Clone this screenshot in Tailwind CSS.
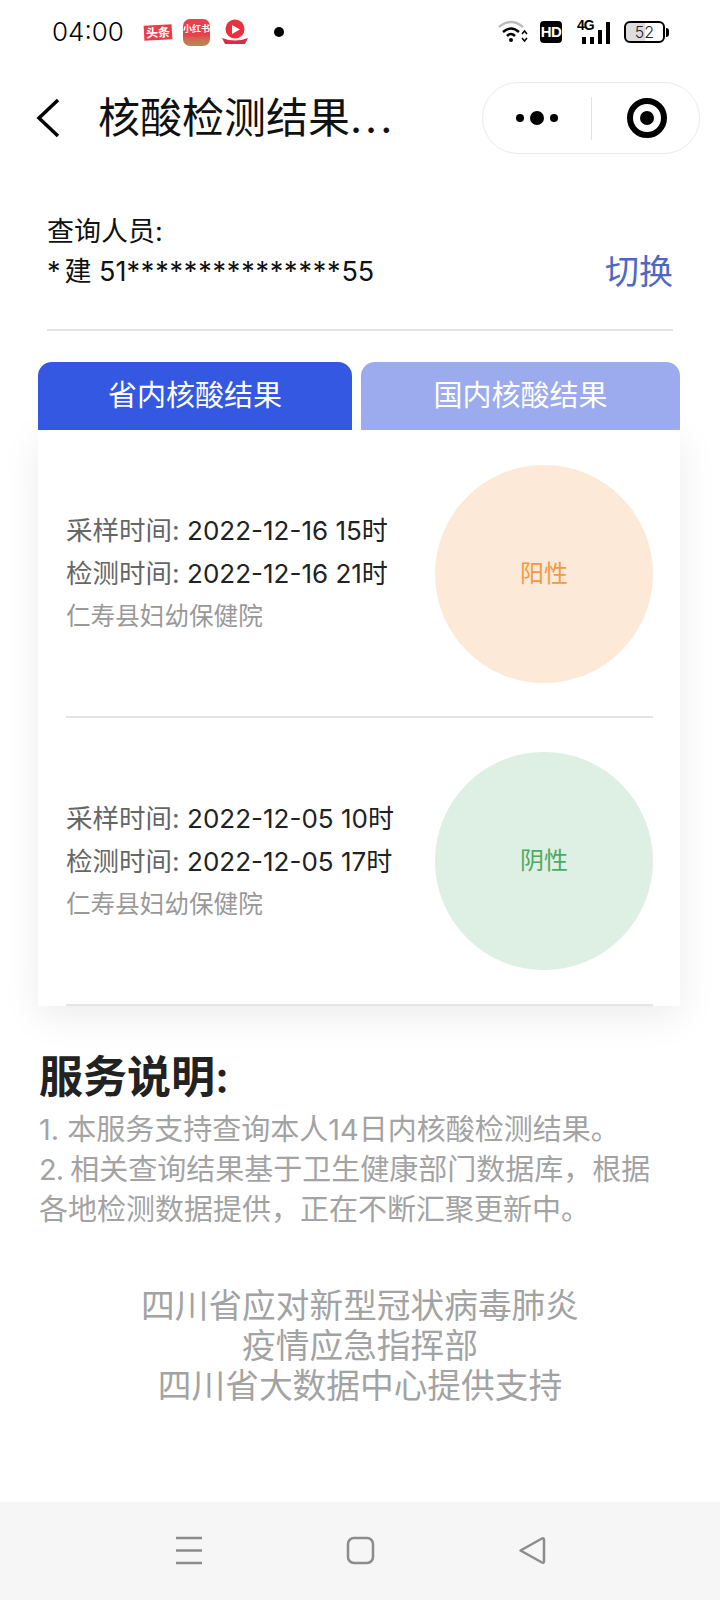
<!DOCTYPE html>
<html lang="zh">
<head>
    <meta charset="UTF-8">
    <meta name="viewport" content="width=device-width, initial-scale=1.0">
    <title>核酸检测结果</title>
    <script src="https://cdn.jsdelivr.net/npm/@tailwindcss/browser@4"></script>
</head>
<body class="bg-white font-['Inter','Noto_Sans_CJK_SC',sans-serif]">
    <div class="w-[720px] h-[1600px] flex flex-col overflow-hidden">
        <!-- status bar -->
        <div class="h-[64px] flex items-center pl-[52px] pr-[51px] text-black">
            <span class="text-[26px] w-[92px] leading-none font-light">04:00</span>
            <span class="w-[28px] h-[15px] bg-[#e5404a] rotate-[-3deg] text-white text-[12px] font-bold leading-[15px] text-center">头条</span>
            <span class="ml-[11px] w-[27px] h-[27px] rounded-[7px] bg-gradient-to-b from-[#e8404c] from-60% to-[#a88f5c] text-white text-[9px] font-bold leading-[20px] text-center">小红书</span>
            <svg class="ml-[11px]" width="28" height="26" viewBox="0 0 28 26">
                <circle cx="14" cy="10" r="9.5" fill="#e8303f"/>
                <path d="M11 6l8 4.500-8 4.500z" fill="#fff"/>
                <path d="M1 19q13 5 26 0l-3 6H4z" fill="#d92b4a"/>
            </svg>
            <span class="ml-[25px] w-[10px] h-[10px] rounded-full bg-black"></span>
            <div class="ml-auto flex items-center">
                <svg width="30" height="24" viewBox="0 0 30 24">
                    <path d="M1 7q12-10 24 0" fill="none" stroke="#bbb" stroke-width="2.500"/>
                    <path d="M5 12q8-7 16 0" fill="none" stroke="#000" stroke-width="2.500"/>
                    <path d="M9 16q4-4 8 0" fill="none" stroke="#000" stroke-width="2.500"/>
                    <circle cx="13" cy="20" r="2" fill="#000"/>
                    <path d="M24 14l2.500-3 2.500 3M24 18l2.500 3 2.500-3" fill="none" stroke="#000" stroke-width="1.500"/>
                </svg>
                <span class="ml-[12px] w-[22px] h-[22px] rounded-[4px] bg-black text-white text-[15px] tracking-[-0.5px] font-bold leading-[22px] text-center font-['Liberation_Sans']">HD</span>
                <span class="ml-[15px] relative w-[34px] h-[24px]">
                    <span class="absolute left-0 top-[-2px] text-[14px] tracking-[-1px] font-bold leading-none font-['Liberation_Sans']">4G</span>
                    <span class="absolute left-[5px] bottom-0 w-[4px] h-[7px] bg-black"></span>
                    <span class="absolute left-[13px] bottom-0 w-[4px] h-[7px] bg-black"></span>
                    <span class="absolute left-[21px] bottom-0 w-[4px] h-[14px] bg-black"></span>
                    <span class="absolute left-[29px] bottom-0 w-[4px] h-[22px] bg-black"></span>
                </span>
                <span class="ml-[13px] w-[41px] h-[22px] rounded-[6px] border-2 border-black text-[16px] font-light leading-[18px] text-center bg-gradient-to-r from-[#ddd] from-[52%] to-white to-[52%] text-[#222]">52</span>
                <span class="ml-[1px] w-[3px] h-[9px] bg-black rounded-r-sm"></span>
            </div>
        </div>

        <!-- nav bar -->
        <div class="h-[90px] mt-[9px] flex items-center pl-[36px] pr-[20px]">
            <svg width="26" height="40" viewBox="0 0 26 40">
                <path d="M22 2L3 20l19 18" fill="none" stroke="#000" stroke-width="3.500"/>
            </svg>
            <span class="ml-[36px] text-[42px] leading-none text-[#111]">核酸检测结果<span class="tracking-[3px]">...</span></span>
            <div class="ml-auto w-[218px] h-[72px] rounded-full border border-[#ebebeb] flex items-center">
                <div class="w-[108px] flex items-center justify-center gap-[6px]">
                    <span class="w-[8px] h-[8px] rounded-full bg-black"></span>
                    <span class="w-[14px] h-[14px] rounded-full bg-black"></span>
                    <span class="w-[8px] h-[8px] rounded-full bg-black"></span>
                </div>
                <div class="w-px h-[43px] bg-[#e2e2e2]"></div>
                <div class="flex-1 flex items-center justify-center pl-[2px]">
                    <span class="w-[40px] h-[40px] rounded-full border-[6px] border-black flex items-center justify-center">
                        <span class="w-[14px] h-[14px] rounded-full bg-black"></span>
                    </span>
                </div>
            </div>
        </div>

        <!-- person -->
        <div class="mx-[47px] mt-[56px] h-[112px] border-b-2 border-[#e4e4e4] relative text-[#111] text-[27px] leading-[40px]">
            <div class="mt-[-7px]">查询人员:</div>
            <div class="flex items-center justify-between">
                <span><span class="mr-[4px]">*</span>建 51<span class="tracking-[0.8px]">***************</span>55</span>
                <span class="text-[#4f67c4] text-[34px]">切换</span>
            </div>
        </div>

        <!-- tabs -->
        <div class="mx-[38px] mt-[31px] flex gap-[9px] relative z-10">
            <div class="w-[314px] h-[68px] bg-[#3558e3] rounded-t-[14px] text-white text-[29px] flex items-center justify-center">省内核酸结果</div>
            <div class="w-[319px] h-[68px] bg-[#9babee] rounded-t-[14px] text-white text-[29px] flex items-center justify-center">国内核酸结果</div>
        </div>

        <!-- result list -->
        <div class="ml-[38px] w-[642px] h-[576px] bg-white pl-[28px] pr-[27px] pt-[1px] shadow-[0_10px_36px_rgba(0,0,0,0.08)]">
            <div class="h-[287px] border-b-2 border-[#e4e4e4] flex items-center justify-between">
                <div class="text-[26.5px] leading-[43px] text-[#666]">
                    <div>采样时间: <span class="text-[26px] text-[#222]">2022-12-16 15时</span></div>
                    <div>检测时间: <span class="text-[26px] text-[#222]">2022-12-16 21时</span></div>
                    <div class="text-[24.6px] text-[#999]">仁寿县妇幼保健院</div>
                </div>
                <div class="w-[218px] h-[218px] rounded-full bg-[#fde9d7] flex items-center justify-center text-[24px] text-[#f19a45]">阳性</div>
            </div>
            <div class="h-[288px] border-b-2 border-[#e4e4e4] flex items-center justify-between">
                <div class="text-[26.5px] leading-[43px] text-[#666]">
                    <div>采样时间: <span class="text-[26px] text-[#222]">2022-12-05 10时</span></div>
                    <div>检测时间: <span class="text-[26px] text-[#222]">2022-12-05 17时</span></div>
                    <div class="text-[24.6px] text-[#999]">仁寿县妇幼保健院</div>
                </div>
                <div class="w-[218px] h-[218px] rounded-full bg-[#deefe4] flex items-center justify-center text-[24px] text-[#4eaa63]">阴性</div>
            </div>
        </div>

        <!-- notes -->
        <div class="mx-[39px] mt-[43px]">
            <h2 class="text-[44px] leading-[56px] font-semibold text-[#222]">服务说明:</h2>
            <div class="text-[29px] leading-[40px] text-[#a3a3a3] mt-[5px]">
                <p>1. 本服务支持查询本人14日内核酸检测结果。</p>
                <p><span class="tracking-[-1px]">2. </span>相关查询结果基于卫生健康部门数据库，根据</p>
                <p>各地检测数据提供，正在不断汇聚更新中。</p>
            </div>
        </div>

        <div class="mt-[56px] text-center text-[33.7px] leading-[40px] text-[#a3a3a3]">
            <p>四川省应对新型冠状病毒肺炎</p>
            <p>疫情应急指挥部</p>
            <p>四川省大数据中心提供支持</p>
        </div>

        <!-- android nav -->
        <div class="mt-auto h-[98px] bg-[#f6f6f6] relative">
            <svg class="absolute left-[174px] top-[34px]" width="30" height="30" viewBox="0 0 30 30">
                <path d="M2 2h26M2 14.500h26M2 27h26" stroke="#8c8c8c" stroke-width="2.500"/>
            </svg>
            <svg class="absolute left-[346px] top-[34px]" width="30" height="30" viewBox="0 0 30 30">
                <rect x="2" y="2" width="25" height="25" rx="6" fill="none" stroke="#8c8c8c" stroke-width="2.500"/>
            </svg>
            <svg class="absolute left-[518px] top-[34px]" width="30" height="30" viewBox="0 0 30 30">
                <path d="M2.500 14.500L24 2.500q2-1 2 1.500v21q0 2.500-2 1.500z" fill="none" stroke="#8c8c8c" stroke-width="2.500" stroke-linejoin="round"/>
            </svg>
        </div>
    </div>
</body>
</html>
